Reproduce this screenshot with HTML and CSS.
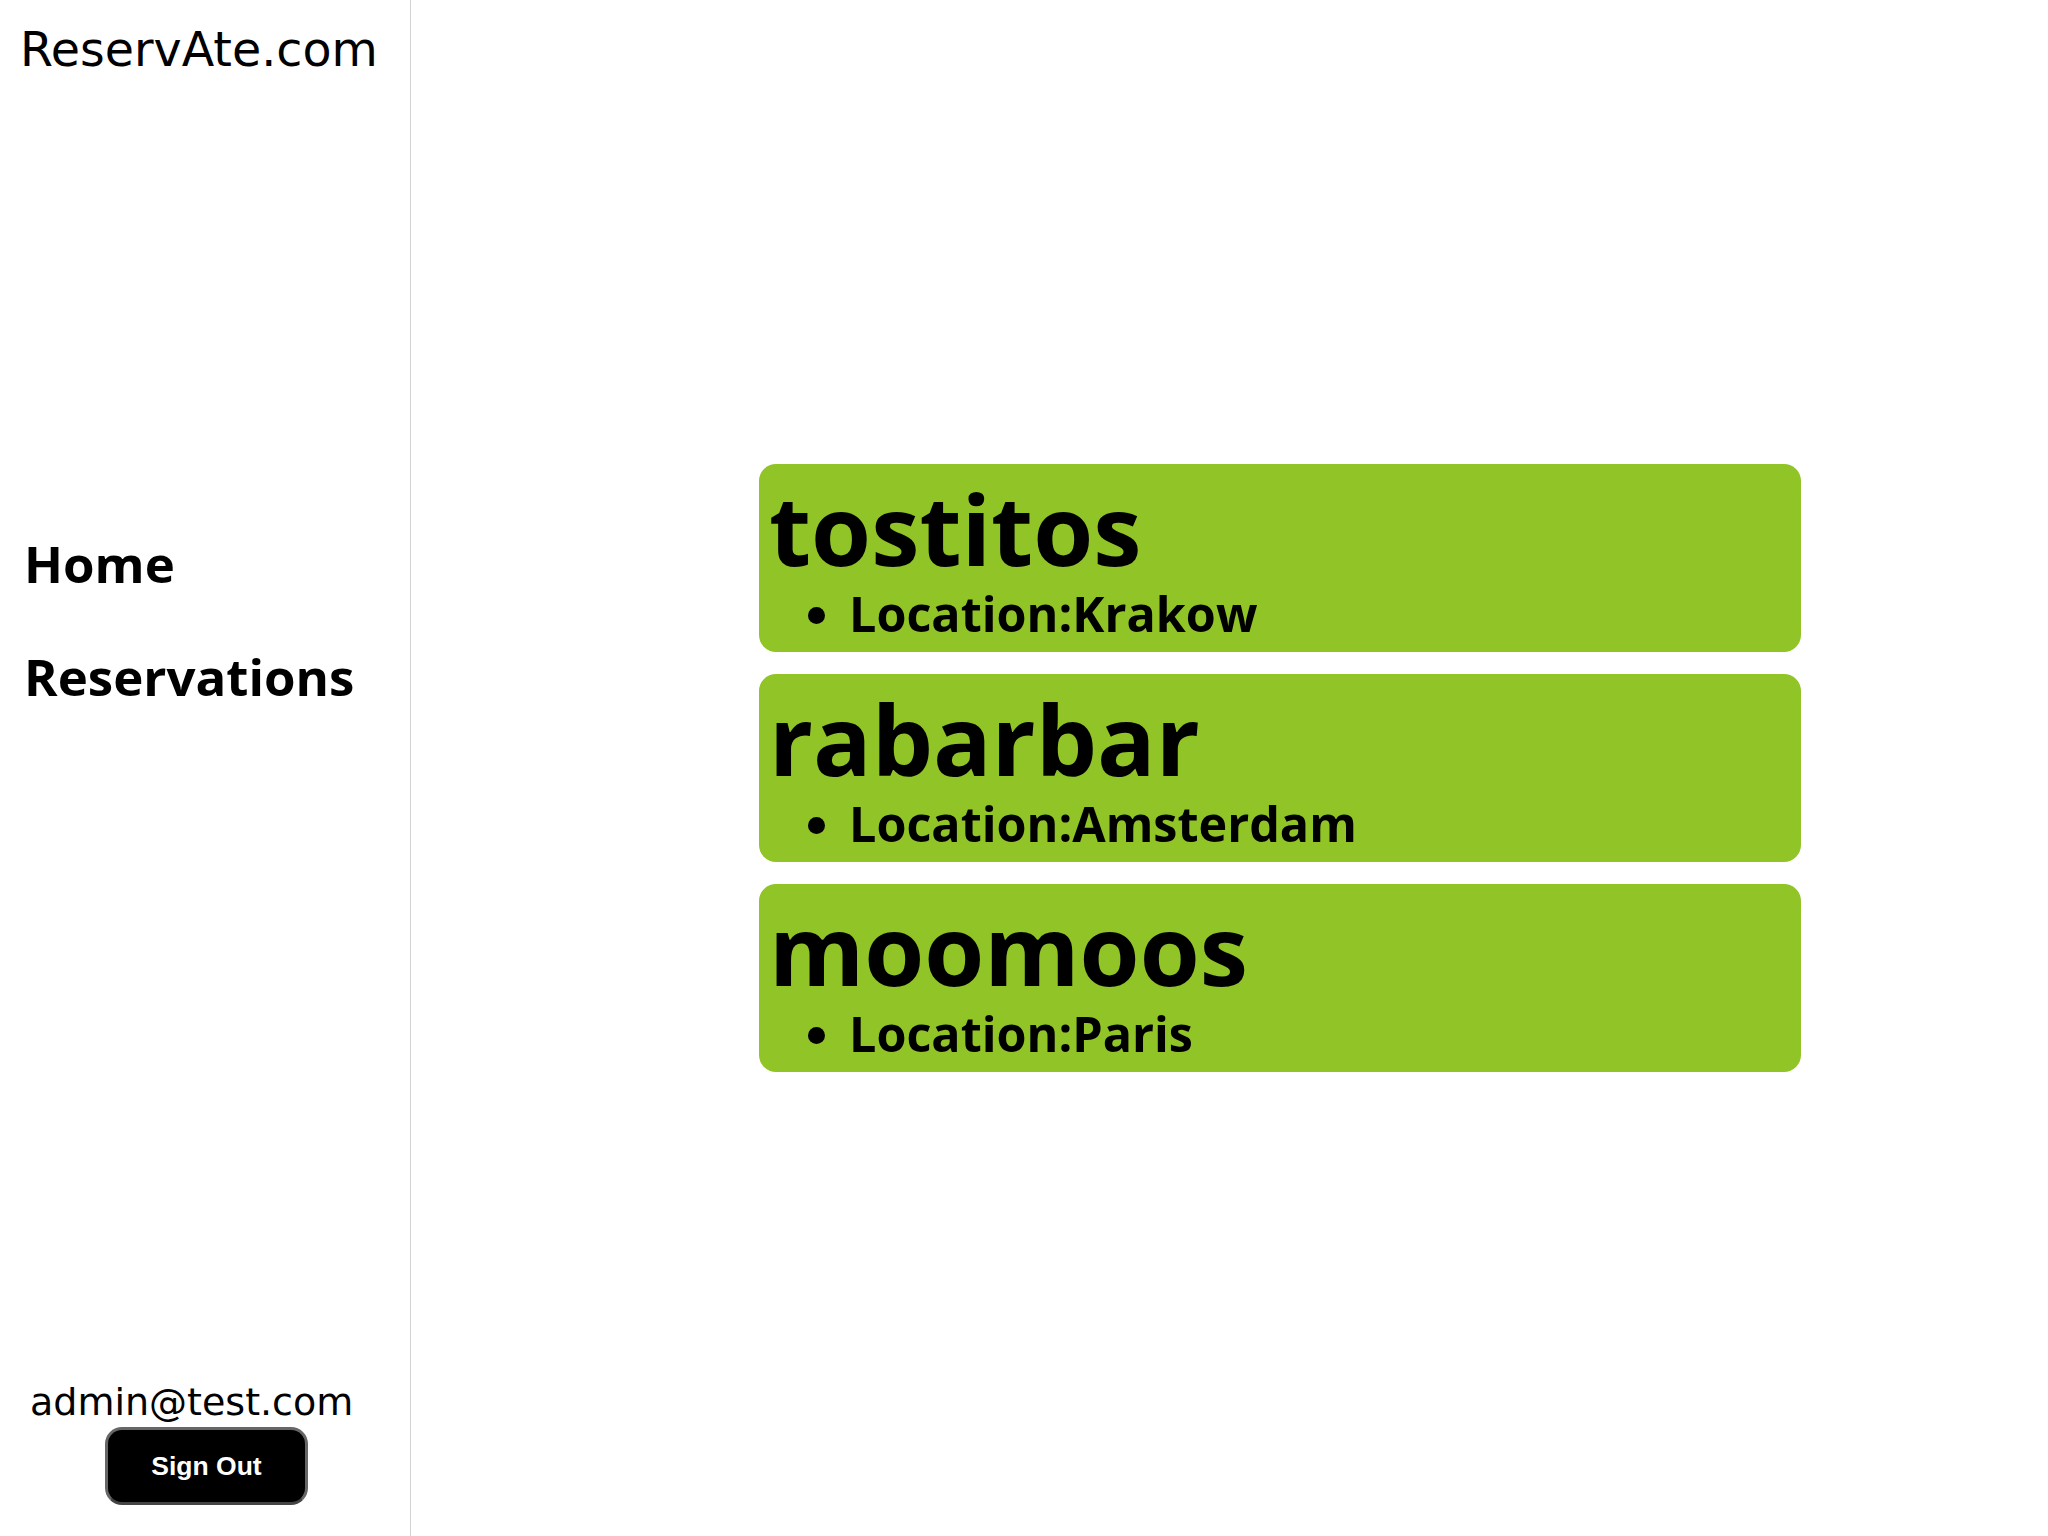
FILE: index.html
```html
<!DOCTYPE html>
<html lang="en">
<head>
<meta charset="utf-8">
<title>ReservAte.com</title>
<link rel="stylesheet" href="styles.css">
</head>
<body>
<div class="layout">
  <aside class="sidebar">
    <div class="brand">ReservAte.com</div>
    <nav class="nav">
      <a class="nav-link" href="#">Home</a>
      <a class="nav-link" href="#">Reservations</a>
    </nav>
    <div class="account">
      <div class="email">admin@test.com</div>
      <button class="signout">Sign Out</button>
    </div>
  </aside>
  <main class="main">
    <div class="card">
      <h1 class="card-title">tostitos</h1>
      <ul class="card-list"><li>Location:Krakow</li></ul>
    </div>
    <div class="card">
      <h1 class="card-title">rabarbar</h1>
      <ul class="card-list"><li>Location:Amsterdam</li></ul>
    </div>
    <div class="card">
      <h1 class="card-title">moomoos</h1>
      <ul class="card-list"><li>Location:Paris</li></ul>
    </div>
  </main>
</div>
</body>
</html>
```
FILE: styles.css
```css
html, body {
  margin: 0;
  padding: 0;
  background: #ffffff;
  color: #000000;
}

.layout {
  display: flex;
  height: 100vh;
}

.sidebar {
  width: 410px;
  flex: 0 0 410px;
  border-right: 1px solid #d4d4d4;
  display: flex;
  flex-direction: column;
  font-family: "DejaVu Sans", sans-serif;
}

.brand {
  padding: 22px 0 0 20px;
  font-size: 47.5px;
  line-height: 56px;
}

.nav {
  margin-top: 455px;
  padding-left: 24px;
  display: flex;
  flex-direction: column;
  gap: 53px;
}

.nav-link {
  font-family: "Open Sans", "Noto Sans", sans-serif;
  font-weight: 700;
  font-size: 51px;
  line-height: 60px;
  color: #000;
  text-decoration: none;
}

.account {
  margin-top: auto;
  padding: 0 0 31px 30px;
  display: flex;
  flex-direction: column;
  align-items: flex-start;
  gap: 3px;
}

.email {
  font-size: 38px;
  line-height: 44px;
}

.signout {
  margin-left: 75px;
  width: 203px;
  height: 78px;
  background: #000;
  color: #fff;
  border: 3px solid #666;
  border-bottom-color: #444;
  border-radius: 17px;
  font-family: "Liberation Sans", Arial, sans-serif;
  font-weight: 700;
  font-size: 26.5px;
  padding: 0;
}

.main {
  flex: 1;
  display: flex;
  flex-direction: column;
  justify-content: center;
  align-items: flex-start;
  gap: 22px;
  padding-left: 348px;
  font-family: "Open Sans", "Noto Sans", sans-serif;
}

.card {
  width: 1042px;
  height: 188px;
  box-sizing: border-box;
  background: #90c427;
  border-radius: 17px;
  padding: 16px 8px 0 10px;
}

.card-title {
  margin: 0;
  font-size: 97px;
  font-weight: 700;
  line-height: 97px;
}

.card-list {
  margin: 6px 0 0 0;
  padding-left: 80px;
  font-size: 48.5px;
  font-weight: 700;
  line-height: 60px;
}
```
